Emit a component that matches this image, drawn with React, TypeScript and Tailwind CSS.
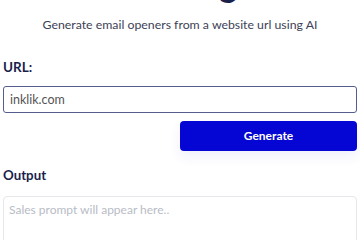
export default function App() {
    return (
        <div className="min-h-screen bg-white px-[3px] font-['Lato',sans-serif] overflow-hidden">
            <h1 className="-mt-[38px] text-center text-[34px] leading-[44px] font-bold text-[#1a1f4b]">
                Writing
            </h1>
            <p className="mt-[9px] text-center text-[12.3px] leading-[20px] text-[#3d4256]">
                Generate email openers from a website url using AI
            </p>

            <form className="mt-[22px]" onSubmit={(event) => event.preventDefault()}>
                <label className="block text-[13.5px] leading-[20px] font-bold text-[#1a1f4b]">URL:</label>
                <input
                    type="text"
                    defaultValue="inklik.com"
                    className="mt-[9px] block h-[27px] w-full rounded-[3px] border-[1.5px] border-[#555d8e] px-[6px] text-[12.5px] text-[#555] focus:outline-none"
                />

                <div className="mt-[8px] flex justify-end">
                    <button
                        type="submit"
                        className="h-[30px] w-[177px] rounded-[4px] bg-[#0505d4] text-[12px] font-bold text-white shadow-[0_6px_12px_rgba(60,60,220,0.08)]"
                    >
                        Generate
                    </button>
                </div>

                <h2 className="mt-[14px] text-[13.3px] leading-[20px] font-bold text-[#1a1f4b]">Output</h2>
                <textarea
                    placeholder="Sales prompt will appear here.."
                    className="mt-[11px] block h-[80px] w-full resize-none rounded-[4px] border border-[#e5e7eb] px-[5px] py-[4px] text-[12px] placeholder-[#b8bcc6] focus:outline-none"
                />
            </form>
        </div>
    );
}
